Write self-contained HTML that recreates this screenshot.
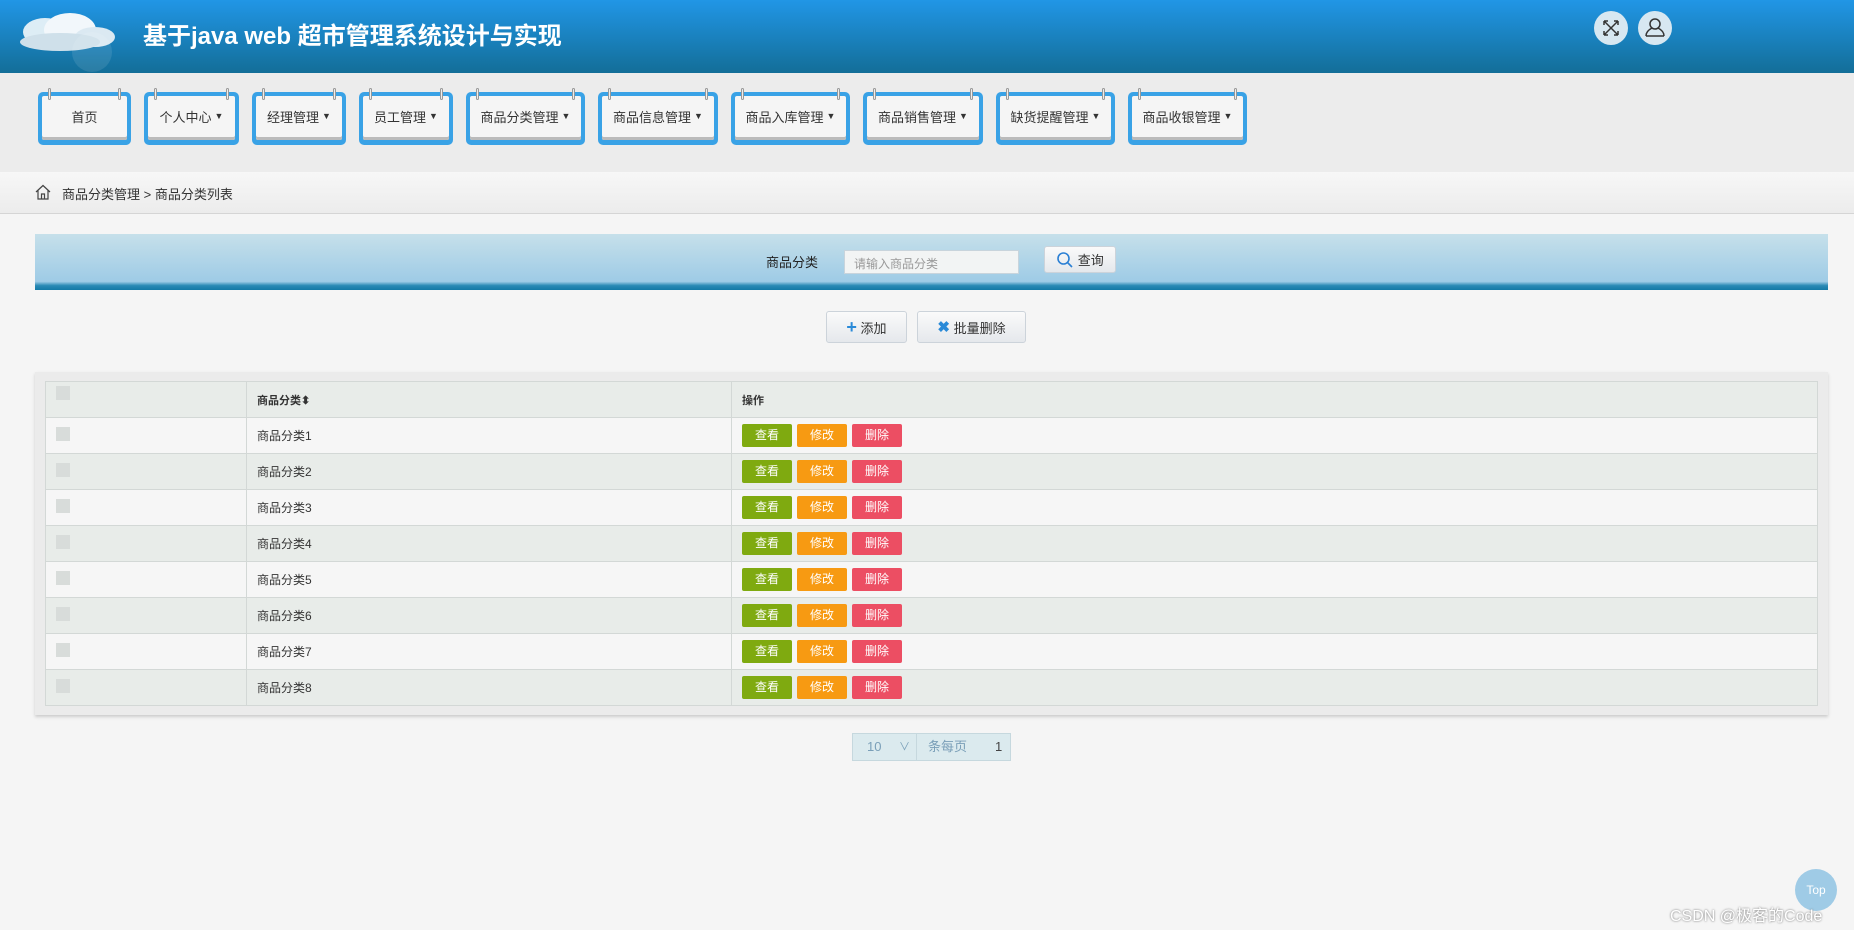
<!DOCTYPE html>
<html><head><meta charset="utf-8"><style>
*{margin:0;padding:0;box-sizing:border-box}
body{width:1854px;height:930px;background:#f5f5f5;font-family:"Liberation Sans","Noto Sans CJK SC",sans-serif;position:relative;overflow:hidden;color:#333}
.abs{position:absolute}
#hd{left:0;top:0;width:1854px;height:73px;background:linear-gradient(#2196e6,#136e98)}
#hd .t{left:143px;top:16px;font-size:24px;color:#fff;font-weight:bold;letter-spacing:0}
.ic{width:34px;height:34px;border-radius:50%;background:#d7e7f1;top:11px}
#nav{left:0;top:73px;width:1854px;height:99px;background:#ececec}
.tab{top:92px;height:53px;background:#39a2e6;border-radius:5px;padding:4px 4px 5px 4px}
.tab div{background:#f5f5f5;height:100%;border-radius:2px;font-size:13px;color:#333;display:flex;align-items:center;justify-content:center;box-shadow:inset 0 -3px 0 #bbb;padding-bottom:4px}
.tab i{position:absolute;top:-4px;width:3px;height:12px;background:#eee;border:1px solid #999;border-radius:2px}
.car{font-size:9px;margin-left:3px}
#bc{left:0;top:172px;width:1854px;height:42px;background:linear-gradient(#f7f7f7,#ececec);border-bottom:1px solid #d5d5d5;font-size:13px}
#sb{left:35px;top:234px;width:1793px;height:56px;background:linear-gradient(#c6e0ea,#9ecbe6 85%,#2a8ab5 92%,#1479a6);}
.btn{background:linear-gradient(#fafafa,#e5e8ec);border:1px solid #ccd3da;border-radius:3px;font-size:13px;display:flex;align-items:center;justify-content:center}
#tw{left:35px;top:372px;width:1793px;height:343px;background:#ebebeb;box-shadow:0 2px 3px #ccc}
table{position:absolute;left:45px;top:381px;width:1773px;border-collapse:collapse;font-size:12px}
td{border:1px solid #d3d8d6;height:36px;padding-left:10px}
tr:nth-child(odd) td{background:#e8ece9}
tr:nth-child(even) td{background:#f6f6f6}
.cb{display:inline-block;width:14px;height:14px;background:#d8dcda}
.b{display:inline-block;width:50px;height:23px;color:#fff;font-size:12px;text-align:center;line-height:23px;border-radius:2px;margin-right:5px;vertical-align:middle}
</style></head><body>
<div id="hd" class="abs">
 <svg class="abs" style="left:10px;top:2px" width="115" height="70"><ellipse cx="35" cy="30" rx="22" ry="14" fill="#e8f2f8" opacity=".95"/><ellipse cx="60" cy="28" rx="26" ry="17" fill="#f2f7fb"/><ellipse cx="85" cy="35" rx="20" ry="10" fill="#dbe9f2"/><ellipse cx="50" cy="40" rx="40" ry="9" fill="#cfe0ea"/><circle cx="82" cy="50" r="20" fill="#fff" opacity=".1"/></svg>
 <div class="abs t">基于java web 超市管理系统设计与实现</div>
 <div class="abs ic" style="left:1594px"><svg width="34" height="34" stroke="#333" stroke-width="1.5" fill="none"><path d="M10 10L24 24M24 10L10 24M10 10h4M10 10v4M24 10h-4M24 10v4M10 24h4M10 24v-4M24 24h-4M24 24v-4"/></svg></div>
 <div class="abs ic" style="left:1638px"><svg width="34" height="34" stroke="#333" stroke-width="1.5" fill="none"><circle cx="17" cy="13" r="5"/><path d="M8 25c0-5 4-7 6-8M26 25c0-5-4-7-6-8M8 25h18"/></svg></div>
</div>
<div id="nav" class="abs"></div>
<div class="abs tab" style="left:38px;width:93px"><i style="left:10px"></i><i style="right:10px"></i><div>首页</div></div>
<div class="abs tab" style="left:144px;width:95px"><i style="left:10px"></i><i style="right:10px"></i><div>个人中心<span class="car">▼</span></div></div>
<div class="abs tab" style="left:252px;width:94px"><i style="left:10px"></i><i style="right:10px"></i><div>经理管理<span class="car">▼</span></div></div>
<div class="abs tab" style="left:359px;width:94px"><i style="left:10px"></i><i style="right:10px"></i><div>员工管理<span class="car">▼</span></div></div>
<div class="abs tab" style="left:466px;width:119px"><i style="left:10px"></i><i style="right:10px"></i><div>商品分类管理<span class="car">▼</span></div></div>
<div class="abs tab" style="left:598px;width:120px"><i style="left:10px"></i><i style="right:10px"></i><div>商品信息管理<span class="car">▼</span></div></div>
<div class="abs tab" style="left:731px;width:119px"><i style="left:10px"></i><i style="right:10px"></i><div>商品入库管理<span class="car">▼</span></div></div>
<div class="abs tab" style="left:863px;width:120px"><i style="left:10px"></i><i style="right:10px"></i><div>商品销售管理<span class="car">▼</span></div></div>
<div class="abs tab" style="left:996px;width:119px"><i style="left:10px"></i><i style="right:10px"></i><div>缺货提醒管理<span class="car">▼</span></div></div>
<div class="abs tab" style="left:1128px;width:119px"><i style="left:10px"></i><i style="right:10px"></i><div>商品收银管理<span class="car">▼</span></div></div>
<div id="bc" class="abs">
 <svg class="abs" style="left:35px;top:12px" width="16" height="16" stroke="#444" fill="none" stroke-width="1.2"><path d="M1 8L8 1.5L15 8M3 6.5V15H13V6.5M6.5 15V10H9.5V15"/></svg>
 <div class="abs" style="left:62px;top:12px">商品分类管理 &gt; 商品分类列表</div>
</div>
<div id="sb" class="abs">
 <div class="abs" style="left:731px;top:18px;font-size:13px;color:#222">商品分类</div>
 <div class="abs" style="left:809px;top:16px;width:175px;height:24px;background:#f2f4f4;border:1px solid #c8d4dc;font-size:12px;color:#999;padding:4px 9px">请输入商品分类</div>
 <div class="abs btn" style="left:1009px;top:12px;width:72px;height:27px"><svg width="18" height="18" stroke="#2a7fd4" fill="none" stroke-width="1.6"><circle cx="7.5" cy="7.5" r="5.5"/><path d="M11.5 11.5L16 16"/></svg>&nbsp;查询</div>
</div>
<div class="abs btn" style="left:826px;top:311px;width:81px;height:32px"><b style="color:#2a8ad8;font-size:18px">+</b>&nbsp;添加</div>
<div class="abs btn" style="left:917px;top:311px;width:109px;height:32px"><b style="color:#2a8ad8;font-size:15px">✖</b>&nbsp;批量删除</div>
<div id="tw" class="abs"></div>
<table>
<tr><td style="width:201px;vertical-align:top;padding-top:4px"><span class="cb"></span></td><td style="width:485px;font-weight:bold;font-size:11px">商品分类⬍</td><td style="font-weight:bold;font-size:11px">操作</td></tr>
<tr><td><span class="cb"></span></td><td>商品分类1</td><td><span class="b" style="background:#7faa10">查看</span><span class="b" style="background:#f79a12">修改</span><span class="b" style="background:#ec4e63">删除</span></td></tr>
<tr><td><span class="cb"></span></td><td>商品分类2</td><td><span class="b" style="background:#7faa10">查看</span><span class="b" style="background:#f79a12">修改</span><span class="b" style="background:#ec4e63">删除</span></td></tr>
<tr><td><span class="cb"></span></td><td>商品分类3</td><td><span class="b" style="background:#7faa10">查看</span><span class="b" style="background:#f79a12">修改</span><span class="b" style="background:#ec4e63">删除</span></td></tr>
<tr><td><span class="cb"></span></td><td>商品分类4</td><td><span class="b" style="background:#7faa10">查看</span><span class="b" style="background:#f79a12">修改</span><span class="b" style="background:#ec4e63">删除</span></td></tr>
<tr><td><span class="cb"></span></td><td>商品分类5</td><td><span class="b" style="background:#7faa10">查看</span><span class="b" style="background:#f79a12">修改</span><span class="b" style="background:#ec4e63">删除</span></td></tr>
<tr><td><span class="cb"></span></td><td>商品分类6</td><td><span class="b" style="background:#7faa10">查看</span><span class="b" style="background:#f79a12">修改</span><span class="b" style="background:#ec4e63">删除</span></td></tr>
<tr><td><span class="cb"></span></td><td>商品分类7</td><td><span class="b" style="background:#7faa10">查看</span><span class="b" style="background:#f79a12">修改</span><span class="b" style="background:#ec4e63">删除</span></td></tr>
<tr><td><span class="cb"></span></td><td>商品分类8</td><td><span class="b" style="background:#7faa10">查看</span><span class="b" style="background:#f79a12">修改</span><span class="b" style="background:#ec4e63">删除</span></td></tr>
</table>
<div class="abs" style="left:852px;top:733px;width:159px;height:28px;background:#dbeaee;border:1px solid #c6d8de;font-size:13px;color:#7a9fb8;line-height:26px">
 <span class="abs" style="left:14px;top:0">10</span><span class="abs" style="left:46px;top:0;font-size:11px">∨</span>
 <span class="abs" style="left:63px;top:0;width:1px;height:26px;background:#c6d8de"></span>
 <span class="abs" style="left:75px;top:0">条每页</span><span class="abs" style="left:142px;top:0;color:#444">1</span>
</div>
<div class="abs" style="left:1795px;top:869px;width:42px;height:42px;border-radius:50%;background:#9fcbe6;font-size:12px;color:#fff;text-align:center;line-height:42px">Top</div>
<div class="abs" style="left:1670px;top:902px;font-size:16px;color:#fff;text-shadow:0 0 2px #666">CSDN @极客的Code</div>
</body></html>
